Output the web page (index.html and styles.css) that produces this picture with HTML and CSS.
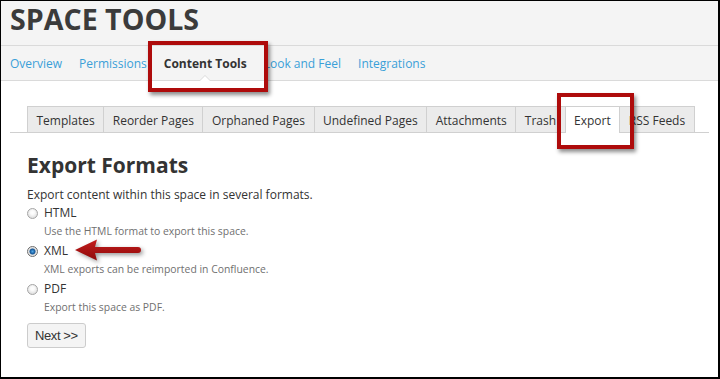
FILE: index.html
```html
<!DOCTYPE html>
<html lang="en">
<head>
    <meta charset="UTF-8">
    <meta name="viewport" content="width=device-width, initial-scale=1.0">
    <title>Space Tools - Export</title>
    <link rel="stylesheet" href="styles.css">
</head>
<body>
    <div class="frame">
        <div class="header">
            <h1>SPACE TOOLS</h1>
        </div>

        <ul class="nav">
            <li><a href="#">Overview</a></li>
            <li><a href="#">Permissions</a></li>
            <li class="active"><a href="#">Content Tools</a></li>
            <li><a href="#">Look and Feel</a></li>
            <li><a href="#">Integrations</a></li>
        </ul>

        <div class="content">
            <ul class="tabs">
                <li>Templates</li>
                <li>Reorder Pages</li>
                <li>Orphaned Pages</li>
                <li>Undefined Pages</li>
                <li>Attachments</li>
                <li>Trash</li>
                <li class="active">Export</li>
                <li>RSS Feeds</li>
            </ul>

            <h2>Export Formats</h2>
            <p class="intro">Export content within this space in several formats.</p>

            <div class="option">
                <label><input type="radio" name="format" value="html"> HTML</label>
                <div class="desc">Use the HTML format to export this space.</div>
            </div>
            <div class="option">
                <label><input type="radio" name="format" value="xml" checked> XML</label>
                <div class="desc">XML exports can be reimported in Confluence.</div>
            </div>
            <div class="option">
                <label><input type="radio" name="format" value="pdf"> PDF</label>
                <div class="desc">Export this space as PDF.</div>
            </div>

            <button class="button">Next &gt;&gt;</button>
        </div>

        <!-- screenshot annotations -->
        <div class="callout callout-nav"></div>
        <div class="callout callout-tab"></div>
        <svg class="arrow" width="70" height="24" viewBox="0 0 70 24">
            <defs>
                <linearGradient id="arrowFill" x1="0" y1="0" x2="0" y2="1">
                    <stop offset="0" stop-color="#c41c1c"/>
                    <stop offset="1" stop-color="#8e0a0a"/>
                </linearGradient>
            </defs>
            <path d="M1 12 L23 1.5 L21 9 L64 9 Q67 9 67 12 Q67 15 64 15 L21 15 L23 22.5 Z" fill="url(#arrowFill)"/>
        </svg>
    </div>
</body>
</html>
```

FILE: styles.css
```css
body {
    margin: 0;
    font-family: "Open Sans", "DejaVu Sans", sans-serif;
    color: #333;
}
.frame {
    position: relative;
    width: 720px;
    height: 379px;
    box-sizing: border-box;
    border: 1px solid #000;
    border-right-width: 2px;
    border-bottom-width: 2px;
    background: #fff;
    overflow: hidden;
}
.header {
    height: 44px;
    padding-left: 9px;
    background: #f4f4f4;
    border-bottom: 1px solid #dadada;
}
.header h1 {
    margin: 0;
    font-size: 28.6px;
    line-height: 36px;
    font-weight: 700;
    color: #3b3b3b;
}
.nav {
    display: flex;
    gap: 17px;
    margin: 0;
    padding: 0 0 0 9px;
    list-style: none;
    height: 34px;
    background: #f4f4f4;
    border-bottom: 1px solid #dadada;
}
.nav li {
    position: relative;
    padding-top: 2px;
    font-size: 12px;
    line-height: 32px;
}
.nav a {
    color: #3aa0d8;
    text-decoration: none;
}
.nav li.active a {
    color: #333;
    font-weight: 700;
}
.nav li.active::before,
.nav li.active::after {
    content: "";
    position: absolute;
    left: 50%;
    bottom: -1px;
    margin-left: -6px;
    border: 6px solid transparent;
    border-top: none;
    border-bottom-color: #dadada;
}
.nav li.active::after {
    bottom: -2px;
    border-bottom-color: #fff;
}
.content {
    padding: 0 9px;
}
.tabs {
    display: flex;
    margin: 25px 0 0;
    padding: 0 0 0 17px;
    list-style: none;
    border-bottom: 1px solid #d0d0d0;
}
.tabs li {
    flex-shrink: 0;
    white-space: nowrap;
    height: 23px;
    padding: 2px 8.5px 0;
    margin-right: -1px;
    font-size: 12px;
    line-height: 23px;
    background: #ebebeb;
    border: 1px solid #d0d0d0;
    border-bottom: none;
}
.tabs li.active {
    background: #fff;
    height: 24px;
    margin-bottom: -1px;
    position: relative;
}
.content h2 {
    margin: 17px 0 0 17px;
    font-size: 21px;
    line-height: 30px;
    font-weight: 700;
}
.intro {
    margin: 6px 0 0 17px;
    font-size: 12px;
    line-height: 18px;
}
.option {
    margin: 0 0 3px 17px;
}
.option label {
    display: flex;
    align-items: center;
    gap: 6px;
    font-size: 12px;
    line-height: 18px;
}
.option input {
    appearance: none;
    width: 11px;
    height: 11px;
    margin: 0;
    border: 1px solid #a5a5a5;
    border-radius: 50%;
    background: radial-gradient(circle at 50% 40%, #fff 0, #fafafa 2px, #d9d9d9 6px);
}
.option input:checked {
    border-color: #6d6d6d;
    background: radial-gradient(circle at 50% 50%, #4fa6e6 0, #125394 2.6px, #dcdcdc 3.4px, #f2f2f2 5px);
}
.desc {
    margin: 1px 0 0 17px;
    font-size: 10.4px;
    line-height: 16px;
    color: #707070;
}
.button {
    margin: 5px 0 0 17px;
    height: 25px;
    padding: 0 7px;
    font-family: "Liberation Sans", Arial, sans-serif;
    font-size: 13px;
    letter-spacing: -0.4px;
    color: #333;
    background: #f4f4f4;
    border: 1px solid #ccc;
    border-radius: 3px;
}
.callout {
    position: absolute;
    box-sizing: border-box;
    border: 4px solid #ae0b0b;
    box-shadow: 2px 3px 4px rgba(0, 0, 0, 0.45);
}
.callout-nav {
    left: 147px;
    top: 40px;
    width: 120px;
    height: 51px;
}
.callout-tab {
    left: 556px;
    top: 92px;
    width: 77px;
    height: 56px;
}
.arrow {
    position: absolute;
    left: 73px;
    top: 237px;
    filter: drop-shadow(2px 2px 2px rgba(0, 0, 0, 0.4));
}
```
